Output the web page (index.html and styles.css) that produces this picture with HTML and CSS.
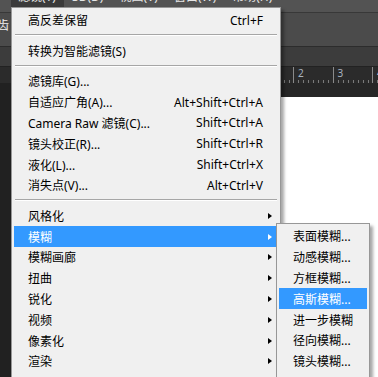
FILE: index.html
```html
<!DOCTYPE html>
<html lang="zh-CN">
<head>
    <meta charset="UTF-8">
    <title>滤镜菜单</title>
    <link rel="stylesheet" href="styles.css">
</head>
<body>
    <div class="app">
        <div class="menubar">
            <span class="mb-item active"><span>滤镜(T)</span></span>
            <span class="mb-item"><span>3D(D)</span></span>
            <span class="mb-item"><span>视图(V)</span></span>
            <span class="mb-item"><span>窗口(W)</span></span>
            <span class="mb-item"><span>帮助(H)</span></span>
        </div>
        <div class="optionsbar"><span class="opt-label">锯齿</span></div>
        <div class="tabbar"></div>
        <div class="ruler">
            <span class="seg"></span><span class="seg"></span><span class="seg"></span>
            <span class="seg"></span><span class="seg"></span><span class="seg"></span>
            <span class="seg"></span><span class="seg">2</span><span class="seg">3</span>
            <span class="seg">4</span>
        </div>
        <div class="workarea">
            <div class="vruler"></div>
            <div class="doc">
                <div class="pasteboard"></div>
                <div class="image"></div>
            </div>
        </div>
    </div>

    <div class="menu main-menu">
        <div class="item"><span class="label">高反差保留</span><span class="key">Ctrl+F</span></div>
        <div class="sep"></div>
        <div class="item"><span class="label">转换为智能滤镜(S)</span></div>
        <div class="sep"></div>
        <div class="item"><span class="label">滤镜库(G)...</span></div>
        <div class="item"><span class="label">自适应广角(A)...</span><span class="key">Alt+Shift+Ctrl+A</span></div>
        <div class="item"><span class="label">Camera Raw 滤镜(C)...</span><span class="key">Shift+Ctrl+A</span></div>
        <div class="item"><span class="label">镜头校正(R)...</span><span class="key">Shift+Ctrl+R</span></div>
        <div class="item"><span class="label">液化(L)...</span><span class="key">Shift+Ctrl+X</span></div>
        <div class="item"><span class="label">消失点(V)...</span><span class="key">Alt+Ctrl+V</span></div>
        <div class="sep"></div>
        <div class="item"><span class="label">风格化</span><span class="arrow"></span></div>
        <div class="item active"><span class="label">模糊</span><span class="arrow"></span></div>
        <div class="item"><span class="label">模糊画廊</span><span class="arrow"></span></div>
        <div class="item"><span class="label">扭曲</span><span class="arrow"></span></div>
        <div class="item"><span class="label">锐化</span><span class="arrow"></span></div>
        <div class="item"><span class="label">视频</span><span class="arrow"></span></div>
        <div class="item"><span class="label">像素化</span><span class="arrow"></span></div>
        <div class="item"><span class="label">渲染</span><span class="arrow"></span></div>
    </div>

    <div class="menu sub-menu">
        <div class="item"><span class="label">表面模糊...</span></div>
        <div class="item"><span class="label">动感模糊...</span></div>
        <div class="item"><span class="label">方框模糊...</span></div>
        <div class="item active"><span class="label">高斯模糊...</span></div>
        <div class="item"><span class="label">进一步模糊</span></div>
        <div class="item"><span class="label">径向模糊...</span></div>
        <div class="item"><span class="label">镜头模糊...</span></div>
    </div>
</body>
</html>
```

FILE: styles.css
```css
html, body {
    margin: 0;
    padding: 0;
    height: 100%;
    overflow: hidden;
}

body {
    position: relative;
    font-family: "Noto Sans", "Noto Sans CJK SC", sans-serif;
    font-size: 12px;
    background: #535353;
}

.app {
    height: 100vh;
    display: flex;
    flex-direction: column;
}

/* top menu bar, mostly hidden behind the open menu */
.menubar {
    height: 12px;
    flex: none;
    display: flex;
    background: #535353;
    overflow: hidden;
    color: #e6e6e6;
}

.mb-item {
    padding: 0 8px;
    height: 12px;
    line-height: 12px;
}

.mb-item span {
    display: block;
    margin-top: -9px;
}

.mb-item.active {
    margin-left: 11px;
    padding-left: 7px;
    background: #3b3b3b;
}

.optionsbar {
    flex: none;
    height: 34px;
    box-sizing: border-box;
    border-top: 1px solid #383838;
    background: #4b4b4b;
    padding-top: 5px;
    overflow: hidden;
}

.opt-label {
    display: block;
    margin-left: -15px;
    line-height: 16px;
    color: #f2f2f2;
}

.tabbar {
    height: 20px;
    flex: none;
    border-top: 1px solid #2c2c2c;
    background: #3c3c3c;
    box-sizing: border-box;
}

.ruler {
    height: 17px;
    flex: none;
    display: flex;
    padding-left: 16.5px;
    background: #2b2b2b;
    border-top: 1px solid #222;
    box-sizing: border-box;
    overflow: hidden;
}

.seg {
    flex: none;
    width: 39.5px;
    box-sizing: border-box;
    border-left: 1px solid #8a8a8a;
    padding: 1px 0 0 4px;
    font-size: 10px;
    line-height: 10px;
    color: #a9b4c0;
    background:
        repeating-linear-gradient(90deg, transparent 0 4px, #7a7a7a 4px 5px) bottom left / 100% 3px no-repeat;
}

.workarea {
    flex: 1;
    display: flex;
}

.vruler {
    width: 20px;
    background: #212121;
}

.doc {
    flex: 1;
    display: flex;
    flex-direction: column;
}

.pasteboard {
    height: 14px;
    background: #262626;
}

.image {
    flex: 1;
    background: #ffffff;
}

/* dropdown menus, both run on past the bottom of the window */
.menu {
    position: absolute;
    bottom: 0;
    box-sizing: border-box;
    background: #f0f0f0;
    border: 1px solid #979797;
    border-bottom: none;
    padding: 2px;
    color: #000;
    box-shadow: 3px 3px 3px rgba(0, 0, 0, 0.35);
    overflow: hidden;
}

.main-menu {
    left: 11px;
    top: 7px;
    width: 270px;
}

.sub-menu {
    left: 276px;
    top: 223px;
    width: 94px;
}

.item {
    height: 20.8px;
    display: flex;
    align-items: center;
    padding: 0 6px 0 14px;
    white-space: nowrap;
}

.item .label {
    flex: 1;
}

.item .key {
    margin-right: 9px;
}

.item .arrow {
    width: 0;
    height: 0;
    border-left: 4px solid #000;
    border-top: 3.5px solid transparent;
    border-bottom: 3.5px solid transparent;
}

.item.active {
    background: #3399ff;
    color: #ffffff;
}

.item.active .arrow {
    border-left-color: #ffffff;
}

.sep {
    height: 9.7px;
    box-sizing: border-box;
    padding: 3.5px 1px 0;
}

.sep::before {
    content: "";
    display: block;
    border-top: 1px solid #a6a6a6;
    border-bottom: 1px solid #ffffff;
}
```
